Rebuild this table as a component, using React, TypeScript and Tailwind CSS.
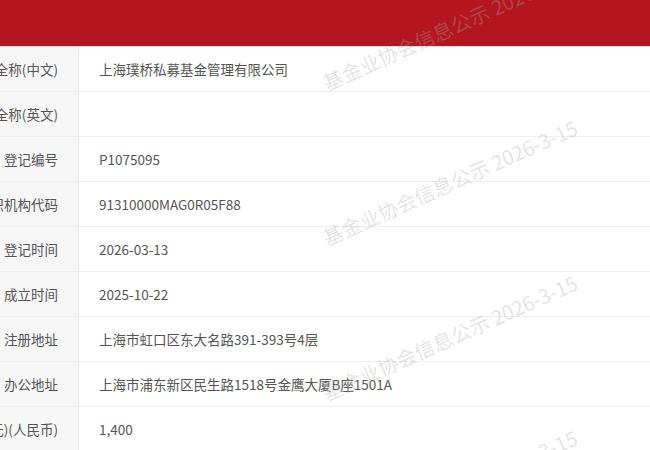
const rows = [
  { label: '基金管理人全称(中文)', value: '上海璞桥私募基金管理有限公司' },
  { label: '基金管理人全称(英文)', value: '' },
  { label: '登记编号', value: 'P1075095' },
  { label: '组织机构代码', value: '91310000MAG0R05F88' },
  { label: '登记时间', value: '2026-03-13' },
  { label: '成立时间', value: '2025-10-22' },
  { label: '注册地址', value: '上海市虹口区东大名路391-393号4层' },
  { label: '办公地址', value: '上海市浦东新区民生路1518号金鹰大厦B座1501A' },
  { label: '注册资本(万元)(人民币)', value: '1,400' },
]

const marks = [73, 228, 383, 538]

export default function App() {
  return (
    <div className="relative w-[650px] h-[450px] overflow-hidden bg-white text-[13.5px] text-[#555] font-['Microsoft_YaHei','Noto_Sans_CJK_SC',sans-serif]">
      <div className="h-[46px] bg-[#b4161f]" />
      <div className="border-t border-[#f0dcdc]">
        {rows.map((row) => (
          <div key={row.label} className="flex h-[45px] border-b border-[#efefef]">
            <div className="w-[79px] shrink-0 flex items-center justify-end pr-[20px] bg-[#f7f7f7] border-r border-[#ececec] whitespace-nowrap">
              {row.label}
            </div>
            <div className="flex items-center pl-[20px] whitespace-nowrap">{row.value}</div>
          </div>
        ))}
      </div>
      {marks.map((top) => (
        <span
          key={top}
          style={{ top }}
          className="absolute left-[328px] origin-bottom-left -rotate-[24deg] whitespace-nowrap leading-[20px] text-[20px] text-[rgba(170,170,170,0.32)] pointer-events-none"
        >
          基金业协会信息公示 2026-3-15
        </span>
      ))}
    </div>
  )
}
